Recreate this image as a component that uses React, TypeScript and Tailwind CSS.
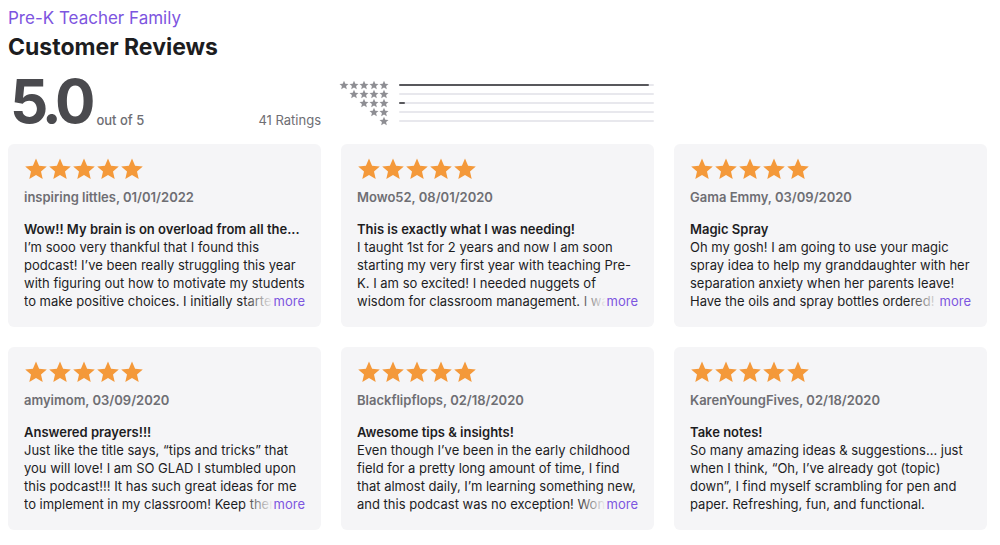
import React from "react";

const reviews = [
  {
    author: "inspiring littles, 01/01/2022",
    title: "Wow!! My brain is on overload from all the...",
    lines: [
      "I\u2019m sooo very thankful that I found this",
      "podcast! I\u2019ve been really struggling this year",
      "with figuring out how to motivate my students",
      "to make positive choices. I initially started listening",
    ],
    more: true,
  },
  {
    author: "Mowo52, 08/01/2020",
    title: "This is exactly what I was needing!",
    lines: [
      "I taught 1st for 2 years and now I am soon",
      "starting my very first year with teaching Pre-",
      "K. I am so excited! I needed nuggets of",
      "wisdom for classroom management. I was so happy",
    ],
    more: true,
  },
  {
    author: "Gama Emmy, 03/09/2020",
    title: "Magic Spray",
    lines: [
      "Oh my gosh! I am going to use your magic",
      "spray idea to help my granddaughter with her",
      "separation anxiety when her parents leave!",
      "Have the oils and spray bottles ordered! \u2018 Thank you",
    ],
    more: true,
  },
  {
    author: "amyimom, 03/09/2020",
    title: "Answered prayers!!!",
    lines: [
      "Just like the title says, \u201Ctips and tricks\u201D that",
      "you will love! I am SO GLAD I stumbled upon",
      "this podcast!!! It has such great ideas for me",
      "to implement in my classroom! Keep them coming",
    ],
    more: true,
  },
  {
    author: "Blackflipflops, 02/18/2020",
    title: "Awesome tips & insights!",
    lines: [
      "Even though I\u2019ve been in the early childhood",
      "field for a pretty long amount of time, I find",
      "that almost daily, I\u2019m learning something new,",
      "and this podcast was no exception! Wonderful",
    ],
    more: true,
  },
  {
    author: "KarenYoungFives, 02/18/2020",
    title: "Take notes!",
    lines: [
      "So many amazing ideas & suggestions... just",
      "when I think, \u201COh, I\u2019ve already got (topic)",
      "down\u201D, I find myself scrambling for pen and",
      "paper. Refreshing, fun, and functional.",
    ],
    more: false,
  },
];

const bars = [
  { stars: 5, pct: 98 },
  { stars: 4, pct: 0 },
  { stars: 3, pct: 2.4 },
  { stars: 2, pct: 0 },
  { stars: 1, pct: 0 },
];

function Star({ size, color }: { size: number; color: string }) {
  return (
    <svg width={size} height={size} viewBox="0 0 24 24" className="shrink-0">
      <path
        d="M12 1.6l3.1 7.1 7.7.7-5.8 5.1 1.7 7.6L12 18.1l-6.7 4 1.7-7.6-5.8-5.1 7.7-.7z"
        fill={color}
      />
    </svg>
  );
}

function ReviewCard({ r }: { r: (typeof reviews)[number] }) {
  const head = r.lines.slice(0, 3);
  const last = r.lines[3];
  return (
    <div className="bg-[#f5f5f7] rounded-[6px] h-[183px] px-4 pt-[13px]">
      <div className="flex">
        {[0, 1, 2, 3, 4].map((i) => (
          <Star key={i} size={24} color="#f4993a" />
        ))}
      </div>
      <p className="mt-[7px] text-[13px] leading-[18px] font-semibold text-[#6e6e73]">
        {r.author}
      </p>
      <p className="mt-[14px] text-[13px] leading-[18px] font-semibold text-[#1d1d1f] whitespace-nowrap">
        {r.title}
      </p>
      <div className="text-[13px] leading-[18px] text-[#1d1d1f]">
        {head.map((l, i) => (
          <p key={i} className="whitespace-nowrap">
            {l}
          </p>
        ))}
        {r.more ? (
          <div className="relative whitespace-nowrap overflow-hidden">
            <p>{last}</p>
            <div className="absolute right-0 top-0 flex h-full">
              <div className="w-[30px] bg-gradient-to-r from-[#f5f5f7]/0 to-[#f5f5f7]" />
              <span className="bg-[#f5f5f7] text-[#7d55e0] pl-[1px]">more</span>
            </div>
          </div>
        ) : (
          <p className="whitespace-nowrap">{last}</p>
        )}
      </div>
    </div>
  );
}

export default function App() {
  return (
    <div className="w-[1000px] h-[545px] bg-white px-2 pt-[7px] font-['Inter','Noto_Sans',sans-serif] overflow-hidden">
      <p className="text-[17px] leading-[22px] text-[#7d55e0]">Pre-K Teacher Family</p>
      <h1 className="mt-[4px] text-[23px] leading-[28px] font-bold text-[#1d1d1f] tracking-[0em]">
        Customer Reviews
      </h1>

      <div className="flex items-end mt-[14px] h-[52px]">
        <div className="w-[313px] flex items-end">
          <span className="text-[60px] leading-[52px] font-bold text-[#4a4a4e] tracking-[-0.085em] pl-[2px]">
            5.0
          </span>
          <span className="ml-[6px] -mb-[1px] text-[13px] leading-[16px] font-medium text-[#6e6e73]">
            out of 5
          </span>
          <span className="ml-auto -mb-[1px] text-[13px] leading-[16px] text-[#6e6e73]">41 Ratings</span>
        </div>
        <div className="ml-[20px] w-[313px] self-start mt-[6px] flex flex-col">
          {bars.map((b) => (
            <div key={b.stars} className="flex items-center h-[8.8px]">
              <div className="w-[48px] flex justify-end">
                {Array.from({ length: b.stars }).map((_, i) => (
                  <Star key={i} size={10} color="#8e8e93" />
                ))}
              </div>
              <div className="ml-[10px] w-[255px] h-[2px] bg-[#e8e8ed] rounded-full">
                <div className="h-full bg-[#58585c] rounded-full" style={{ width: `${b.pct}%` }} />
              </div>
            </div>
          ))}
        </div>
      </div>

      <div className="mt-[17px] grid grid-cols-[313px_313px_313px] gap-x-5 gap-y-5">
        {reviews.map((r, i) => (
          <ReviewCard key={i} r={r} />
        ))}
      </div>
    </div>
  );
}
